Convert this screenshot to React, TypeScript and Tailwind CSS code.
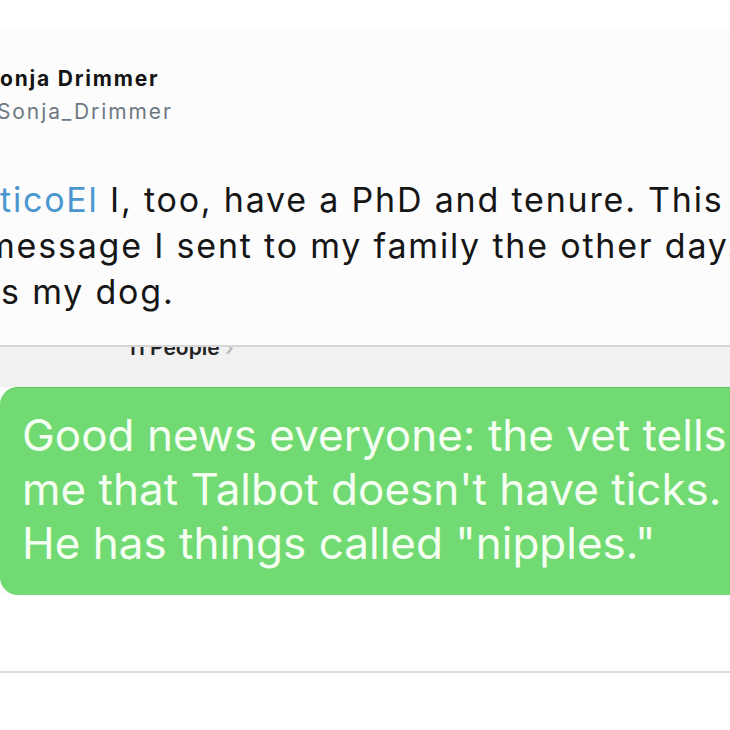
const font = { fontFamily: "Inter, 'Liberation Sans', sans-serif" };

const App = () => {
  return (
    <main
      className="flex h-[730px] w-[730px] flex-col overflow-hidden bg-[#fcfcfc] text-[#141414]"
      style={font}
    >
      <div className="h-[30px] w-full bg-white" />
      <div className="flex flex-col pt-[35px]">
        <p className="whitespace-nowrap text-[21px] font-bold leading-[28px] tracking-[1.8px]">
          onja Drimmer
        </p>
        <p className="-ml-[3px] mt-[5px] whitespace-nowrap text-[21px] leading-[28px] tracking-[1.9px] text-[#6e7882]">
          Sonja_Drimmer
        </p>
      </div>
      <div className="mt-[51px] flex flex-col text-[34px] leading-[46px] tracking-[1.8px] text-[#161616]">
        <p className="whitespace-nowrap">
          <span className="text-[#4a97cf]">ticoEl</span> I, too, have a PhD and tenure. This
        </p>
        <p className="-ml-[15px] whitespace-nowrap">message I sent to my family the other day.</p>
        <p className="-ml-[9px] whitespace-nowrap">is my dog.</p>
      </div>
      <section className="mt-[30px] flex flex-col bg-[#f1f1f1]">
        <div className="h-[2px] w-full bg-[#d6d6d6]" />
        <div className="h-[40px] overflow-hidden pl-[127px]">
          <p className="-mt-[11px] whitespace-nowrap text-[21px] font-semibold leading-[24px] text-[#222]">
            11 People <span className="text-[#bbb]">›</span>
          </p>
        </div>
      </section>
      <div className="flex h-[208px] flex-col justify-center rounded-l-[18px] border-t border-[#62c964] bg-[#72da73] pb-[6px] pl-[22px] text-[44px] leading-[54px] text-[#f4fff2]">
        <p className="whitespace-nowrap">Good news everyone: the vet tells</p>
        <p className="whitespace-nowrap">me that Talbot doesn't have ticks.</p>
        <p className="whitespace-nowrap">He has things called "nipples."</p>
      </div>
      <div className="h-[76px] w-full bg-white" />
      <div className="h-[2px] w-full bg-[#dadada]" />
      <div className="flex-1 bg-white" />
    </main>
  );
};

export default App;
